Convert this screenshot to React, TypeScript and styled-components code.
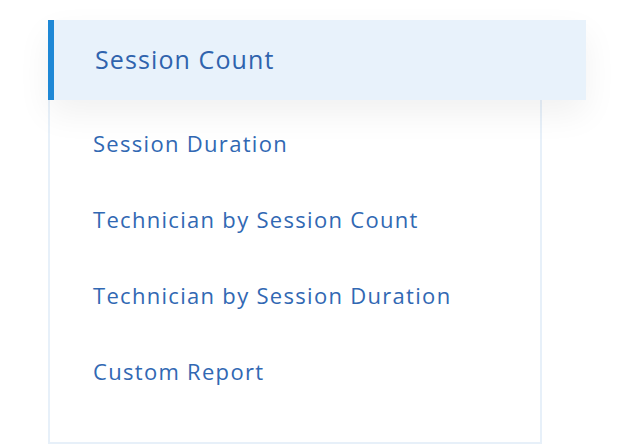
import styled, { createGlobalStyle } from "styled-components";

const GlobalStyle = createGlobalStyle`
  body {
    margin: 0;
    background: #ffffff;
    font-family: "Open Sans", "Liberation Sans", sans-serif;
  }
`;

const Page = styled.div`
  padding: 20px 0 0 48px;
  height: 444px;
  box-sizing: border-box;
  overflow: hidden;
`;

const Panel = styled.nav`
  width: 494px;
  height: 424px;
  box-sizing: border-box;
  border: 2px solid #e7f0f9;
  display: flex;
  flex-direction: column;
`;

const ActiveItem = styled.div`
  margin: -2px 0 5px -2px;
  width: 538px;
  height: 80px;
  box-sizing: border-box;
  background: #e8f2fb;
  border-left: 6px solid #1e88d6;
  box-shadow: 0 14px 34px rgba(0, 0, 0, 0.06);
  display: flex;
  align-items: center;
  padding-left: 41px;
  padding-bottom: 2px;
  color: #2f63ad;
  font-size: 25px;
  font-weight: 500;
  letter-spacing: 1.1px;
  position: relative;
`;

const Item = styled.div`
  height: 76px;
  display: flex;
  align-items: center;
  padding-left: 43px;
  color: #3168b3;
  font-size: 22px;
  letter-spacing: 1.3px;
`;

const items = [
  "Session Duration",
  "Technician by Session Count",
  "Technician by Session Duration",
  "Custom Report",
];

export default function App() {
  return (
    <Page>
      <GlobalStyle />
      <Panel>
        <ActiveItem>Session Count</ActiveItem>
        {items.map((label) => (
          <Item key={label}>{label}</Item>
        ))}
      </Panel>
    </Page>
  );
}
